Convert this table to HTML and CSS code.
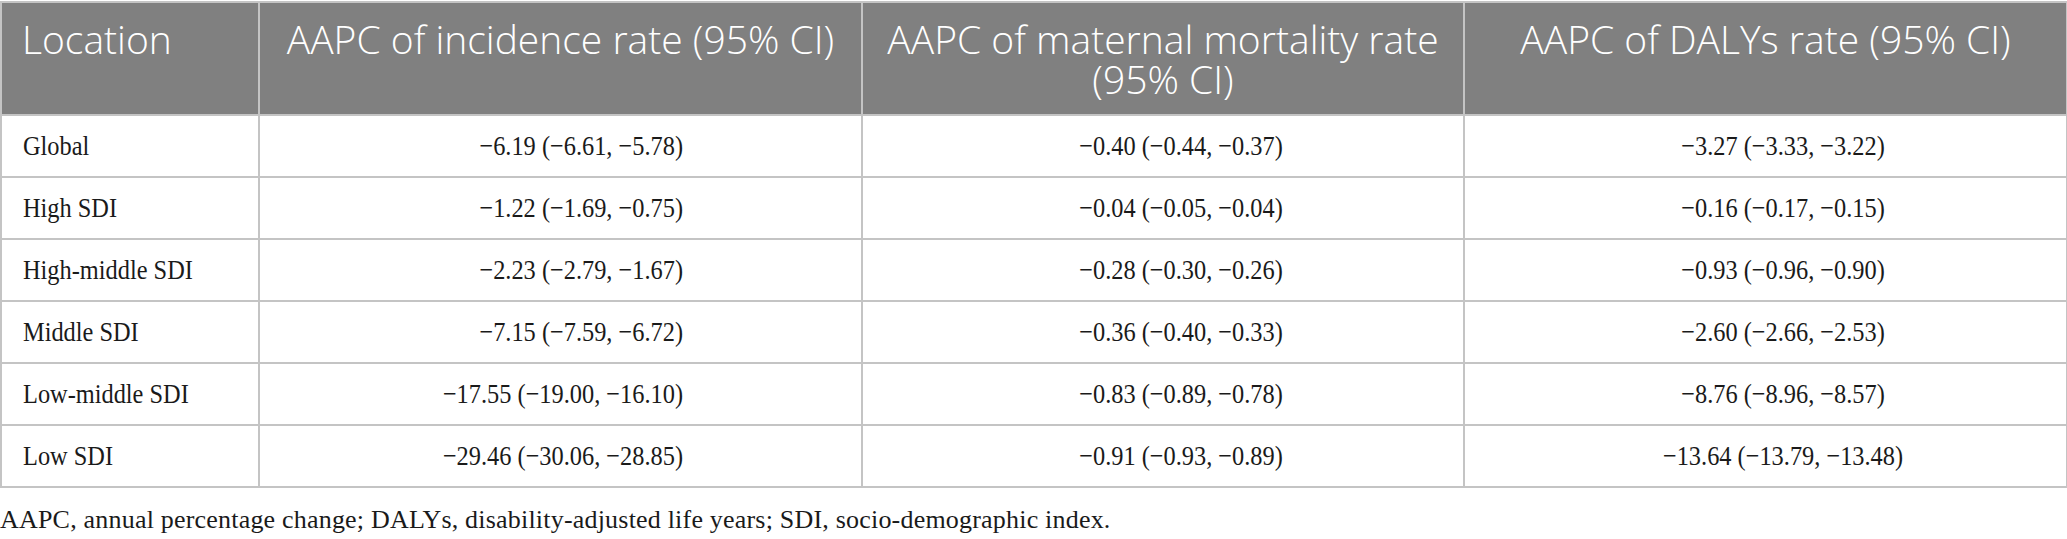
FILE: index.html
```html
<!DOCTYPE html>
<html lang="en">
<head>
<meta charset="utf-8">
<title>AAPC table</title>
<link rel="stylesheet" href="styles.css">
</head>
<body>
<div class="wrap">
<table class="data">
  <colgroup>
    <col class="c1"><col class="c2"><col class="c3"><col class="c4">
  </colgroup>
  <thead>
    <tr>
      <th class="left">Location</th>
      <th>AAPC of incidence rate (95% CI)</th>
      <th>AAPC of maternal mortality rate<br>(95% CI)</th>
      <th>AAPC of DALYs rate (95% CI)</th>
    </tr>
  </thead>
  <tbody>
    <tr><td class="left"><span class="t">Global</span></td><td class="inc"><span class="t">−6.19 (−6.61, −5.78)</span></td><td class="mid"><span class="t">−0.40 (−0.44, −0.37)</span></td><td class="mid"><span class="t">−3.27 (−3.33, −3.22)</span></td></tr>
    <tr><td class="left"><span class="t">High SDI</span></td><td class="inc"><span class="t">−1.22 (−1.69, −0.75)</span></td><td class="mid"><span class="t">−0.04 (−0.05, −0.04)</span></td><td class="mid"><span class="t">−0.16 (−0.17, −0.15)</span></td></tr>
    <tr><td class="left"><span class="t">High-middle SDI</span></td><td class="inc"><span class="t">−2.23 (−2.79, −1.67)</span></td><td class="mid"><span class="t">−0.28 (−0.30, −0.26)</span></td><td class="mid"><span class="t">−0.93 (−0.96, −0.90)</span></td></tr>
    <tr><td class="left"><span class="t">Middle SDI</span></td><td class="inc"><span class="t">−7.15 (−7.59, −6.72)</span></td><td class="mid"><span class="t">−0.36 (−0.40, −0.33)</span></td><td class="mid"><span class="t">−2.60 (−2.66, −2.53)</span></td></tr>
    <tr><td class="left"><span class="t">Low-middle SDI</span></td><td class="inc"><span class="t">−17.55 (−19.00, −16.10)</span></td><td class="mid"><span class="t">−0.83 (−0.89, −0.78)</span></td><td class="mid"><span class="t">−8.76 (−8.96, −8.57)</span></td></tr>
    <tr><td class="left"><span class="t">Low SDI</span></td><td class="inc"><span class="t">−29.46 (−30.06, −28.85)</span></td><td class="mid"><span class="t">−0.91 (−0.93, −0.89)</span></td><td class="mid"><span class="t">−13.64 (−13.79, −13.48)</span></td></tr>
  </tbody>
</table>
<p class="note">AAPC, annual percentage change; DALYs, disability-adjusted life years; SDI, socio-demographic index.</p>
</div>
</body>
</html>
```
FILE: styles.css
```css
html, body {
  margin: 0;
  padding: 0;
  background: #ffffff;
}
.wrap {
  width: 2066px;
  padding-top: 1px;
}
.data {
  width: 2066px;
  border-collapse: collapse;
  table-layout: fixed;
}
.c1 { width: 258px; }
.c2 { width: 603px; }
.c3 { width: 602px; }
.c4 { width: 603px; }
.data th, .data td {
  border: 2px solid #c4c4c4;
}
.data th {
  background: #808080;
  color: #ffffff;
  font-family: "Open Sans", "Noto Sans", sans-serif;
  font-weight: 300;
  font-size: 39px;
  line-height: 40px;
  text-align: center;
  vertical-align: top;
  height: 113px;
  box-sizing: border-box;
  padding: 16px 4px 0;
  white-space: nowrap;
}
.data th.left {
  text-align: left;
  padding-left: 20px;
}
.data td {
  font-family: "Liberation Serif", "Times New Roman", serif;
  font-size: 28px;
  color: #1a1a1a;
  text-align: center;
  vertical-align: middle;
  height: 62px;
  box-sizing: border-box;
  padding: 0 10px;
  white-space: nowrap;
}
.data td .t {
  display: inline-block;
  transform: scaleX(0.87);
  transform-origin: center center;
}
.data td.left {
  text-align: left;
  padding-left: 21px;
}
.data td.left .t {
  transform-origin: left center;
}
.data td.inc {
  text-align: right;
  padding-right: 178px;
}
.data td.inc .t {
  transform-origin: right center;
}
.data td.mid {
  padding-left: 46px;
}
.note {
  margin: 17px 0 0;
  font-family: "Liberation Serif", "Times New Roman", serif;
  font-size: 26px;
  letter-spacing: 0.2px;
  color: #1a1a1a;
  line-height: 30px;
}
```
